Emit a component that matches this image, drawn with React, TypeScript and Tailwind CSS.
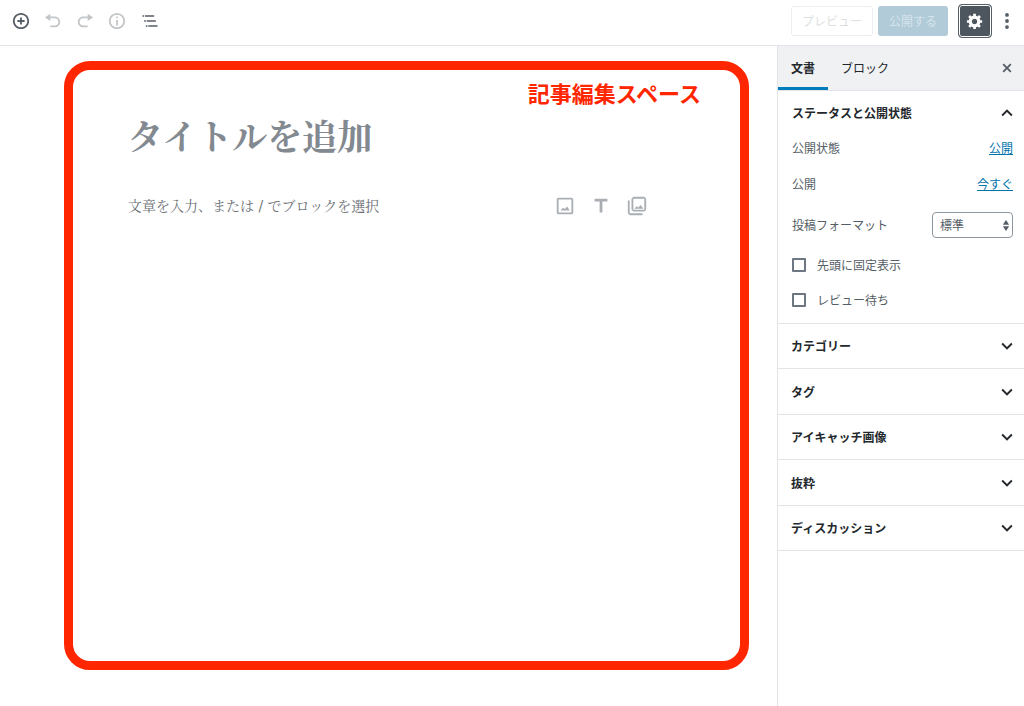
import React, { useState } from 'react';

const PANELS = ['カテゴリー', 'タグ', 'アイキャッチ画像', '抜粋', 'ディスカッション'];

type IconProps = { d: string; box?: number; className?: string };

function Icon({ d, box = 20, className = 'size-[18px]' }: IconProps) {
  return (
    <svg viewBox={`0 0 ${box} ${box}`} className={`shrink-0 fill-current ${className}`} aria-hidden="true">
      <path d={d} />
    </svg>
  );
}

const ICONS = {
  insert: 'M10 1c-5 0-9 4-9 9s4 9 9 9 9-4 9-9-4-9-9-9zm0 16c-3.9 0-7-3.1-7-7s3.1-7 7-7 7 3.1 7 7-3.1 7-7 7zm1-11H9v3H6v2h3v3h2v-3h3V9h-3V6z',
  undo: 'M12 5H7V2L1 6l6 4V7h5c2.2 0 4 1.8 4 4s-1.8 4-4 4H7v2h5c3.3 0 6-2.7 6-6s-2.7-6-6-6z',
  redo: 'M8 5h5V2l6 4-6 4V7H8c-2.2 0-4 1.8-4 4s1.8 4 4 4h5v2H8c-3.3 0-6-2.7-6-6s2.7-6 6-6z',
  info: 'M9 15h2V9H9v6zm1-10c-.5 0-1 .5-1 1s.5 1 1 1 1-.5 1-1-.5-1-1-1zm0-4c-5 0-9 4-9 9s4 9 9 9 9-4 9-9-4-9-9-9zm0 16c-3.9 0-7-3.1-7-7s3.1-7 7-7 7 3.1 7 7-3.1 7-7 7z',
  outline: 'M5 5H3v2h2V5zm3 8h11v-2H8v2zm9-8H6v2h11V5zM7 11H5v2h2v-2zm0 8h2v-2H7v2zm3-2v2h11v-2H10z',
  gear: 'M18 12h-2.18c-.17.7-.44 1.35-.81 1.93l1.54 1.54-2.1 2.1-1.54-1.54c-.58.36-1.23.63-1.91.79V19H8v-2.18c-.68-.16-1.33-.43-1.91-.79l-1.54 1.54-2.12-2.12 1.54-1.54c-.36-.58-.63-1.23-.79-1.91H1V9.03h2.17c.16-.7.44-1.35.8-1.94L2.43 5.55l2.1-2.1 1.54 1.54c.58-.37 1.24-.64 1.93-.81V2h3v2.18c.68.16 1.33.43 1.91.79l1.54-1.54 2.12 2.12-1.54 1.54c.36.59.64 1.24.8 1.94H18V12zm-8.5 1.5c1.66 0 3-1.34 3-3s-1.34-3-3-3-3 1.34-3 3 1.34 3 3 3z',
  more: 'M10 1.2a2.1 2.1 0 1 0 0 4.2 2.1 2.1 0 0 0 0-4.2zm0 6.7a2.1 2.1 0 1 0 0 4.2 2.1 2.1 0 0 0 0-4.2zm0 6.7a2.1 2.1 0 1 0 0 4.2 2.1 2.1 0 0 0 0-4.2z',
  close: 'M14.95 6.46L11.41 10l3.54 3.54-1.41 1.41L10 11.42l-3.53 3.53-1.42-1.42L8.58 10 5.05 6.47l1.42-1.42L10 8.58l3.54-3.53z',
  down: 'M7.41 8.59L12 13.17l4.59-4.58L18 10l-6 6-6-6z',
  up: 'M12 8l-6 6 1.41 1.41L12 10.83l4.59 4.58L18 14z',
  image: 'M19 5v14H5V5h14m0-2H5c-1.1 0-2 .9-2 2v14c0 1.1.9 2 2 2h14c1.1 0 2-.9 2-2V5c0-1.1-.9-2-2-2zM14.2 12.6l-2.4 2.8-2-1.6L7 17h10.2z',
  heading: 'M5 4v3h5.5v12h3V7H19V4z',
  gallery: 'M20 4v12H8V4h12m0-2H8L6 4v12l2 2h12l2-2V4l-2-2zM12 12l1 2 3-3 3 4H9zM2 6v14l2 2h14v-2H4V6H2z',
  updown: 'M5 0l4 6H1zM5 14L1 8h8z',
};

function CheckRow({ label }: { label: string }) {
  const [checked, setChecked] = useState(false);
  return (
    <label className="flex items-center gap-[11px] h-[35px]">
      <input
        type="checkbox"
        checked={checked}
        onChange={(e) => setChecked(e.target.checked)}
        className="appearance-none size-[14px] border-2 border-[#6c7781] rounded-[1px] bg-white checked:bg-[#11a0d2]"
      />
      {label}
    </label>
  );
}

export default function App() {
  const [title, setTitle] = useState('');
  const [body, setBody] = useState('');
  const [format, setFormat] = useState('標準');

  return (
    <div className="min-h-screen flex flex-col bg-white text-xs text-[#555d66] font-['Noto_Sans_CJK_JP',sans-serif]">
      {/* ツールバー */}
      <header className="h-[46px] shrink-0 flex items-center justify-between border-b border-[#e2e4e7] pl-3 pr-2 pb-[3px]">
        <div className="flex items-center gap-[14px] text-[#c3c6c9]">
          <button type="button" aria-label="ブロックの追加" className="text-[#555d66]"><Icon d={ICONS.insert} /></button>
          <button type="button" aria-label="元に戻す" disabled><Icon d={ICONS.undo} /></button>
          <button type="button" aria-label="やり直す" disabled><Icon d={ICONS.redo} /></button>
          <button type="button" aria-label="コンテンツ構造" disabled><Icon d={ICONS.info} /></button>
          <button type="button" aria-label="ブロックナビゲーション" className="text-[#555d66]">
            <Icon d={ICONS.outline} box={24} className="size-5" />
          </button>
        </div>
        <div className="flex items-center">
          <button type="button" disabled className="h-[30px] w-[82px] border border-[#eceeef] rounded-[3px] text-[#dcdfe2]">
            プレビュー
          </button>
          <button type="button" disabled className="h-[30px] w-[70px] ml-[5px] rounded-[3px] bg-[#b1cbd8] text-[#d5e4ec]">
            公開する
          </button>
          <button
            type="button"
            aria-label="設定"
            className="size-[34px] ml-[10px] flex items-center justify-center rounded-[4px] border border-[#555d66] bg-[#4d555f] text-white ring-1 ring-inset ring-white"
          >
            <Icon d={ICONS.gear} />
          </button>
          <button type="button" aria-label="ツールと設定をさらに表示" className="ml-[6px]"><Icon d={ICONS.more} /></button>
        </div>
      </header>

      <div className="flex-1 flex">
        {/* エディター */}
        <main className="flex-1 min-w-0 flex pt-[15px] pb-9 pl-16 pr-7">
          <section className="flex-1 min-w-0 border-[9px] border-[#ff2600] rounded-[26px]">
            <p className="pt-[6px] pr-[39px] text-right text-[22px] leading-8 font-bold text-[#ff2600]">記事編集スペース</p>
            <div className="pl-[55px] pr-[92px] font-['Noto_Serif_CJK_JP','Noto_Serif_JP','Noto_Sans_CJK_JP',serif]">
              <input
                type="text"
                aria-label="タイトルを追加"
                placeholder="タイトルを追加"
                value={title}
                onChange={(e) => setTitle(e.target.value)}
                className="block w-full h-[54px] text-[35px] font-bold outline-none placeholder:text-[#838990]"
              />
              <div className="flex items-center mt-[26px] h-9">
                <input
                  type="text"
                  aria-label="本文"
                  placeholder="文章を入力、または / でブロックを選択"
                  value={body}
                  onChange={(e) => setBody(e.target.value)}
                  className="flex-1 min-w-0 text-sm font-['DejaVu_Serif','Noto_Serif_CJK_JP','Noto_Sans_CJK_JP',serif] outline-none placeholder:text-[#6c7075]"
                />
                <div className="flex gap-[14px] text-[#a9aeb3]">
                  <button type="button" aria-label="画像を追加"><Icon d={ICONS.image} box={24} className="size-[22px]" /></button>
                  <button type="button" aria-label="見出しを追加"><Icon d={ICONS.heading} box={24} className="size-[22px]" /></button>
                  <button type="button" aria-label="ギャラリーを追加"><Icon d={ICONS.gallery} box={24} className="size-[22px]" /></button>
                </div>
              </div>
            </div>
          </section>
        </main>

        {/* 設定サイドバー */}
        <aside className="w-[247px] shrink-0 border-l border-[#e2e4e7]">
          <div className="h-[45px] flex bg-[#f0f1f3] border-b border-[#e2e4e7] text-[#23282d]">
            <button type="button" className="w-[50px] pt-[3px] border-b-[3px] border-[#007cba] font-bold">文書</button>
            <button type="button" className="px-[13px]">ブロック</button>
            <button type="button" aria-label="設定を閉じる" className="ml-auto mr-2 text-[#555d66]"><Icon d={ICONS.close} /></button>
          </div>

          <section className="border-b border-[#e2e4e7] pl-[14px] pr-[11px] pb-[6px]">
            <h2>
              <button type="button" className="w-full h-[39px] pt-1 flex items-center justify-between font-bold text-[#23282d]">
                ステータスと公開状態
                <Icon d={ICONS.up} box={24} className="size-[22px] -mr-[5px]" />
              </button>
            </h2>
            <div className="h-9 flex items-center justify-between">
              <span>公開状態</span>
              <button type="button" className="text-[#0073aa] underline">公開</button>
            </div>
            <div className="h-9 flex items-center justify-between">
              <span>公開</span>
              <button type="button" className="text-[#0073aa] underline">今すぐ</button>
            </div>
            <div className="h-[45px] flex items-center justify-between">
              <label htmlFor="post-format">投稿フォーマット</label>
              <div className="relative">
                <select
                  id="post-format"
                  value={format}
                  onChange={(e) => setFormat(e.target.value)}
                  className="appearance-none w-[81px] h-[26px] pl-[7px] pr-4 rounded-[4px] border border-[#8d96a0] bg-white"
                >
                  <option>標準</option>
                </select>
                <svg viewBox="0 0 10 14" className="absolute right-[3px] top-2 w-2 h-[11px] fill-current pointer-events-none" aria-hidden="true">
                  <path d={ICONS.updown} />
                </svg>
              </div>
            </div>
            <CheckRow label="先頭に固定表示" />
            <CheckRow label="レビュー待ち" />
          </section>

          {PANELS.map((name) => (
            <h2 key={name} className="h-[45px] even:h-[46px] border-b border-[#e2e4e7]">
              <button type="button" className="size-full pl-[13px] pr-[6px] flex items-center justify-between font-bold text-[#23282d]">
                {name}
                <Icon d={ICONS.down} box={24} className="size-[22px]" />
              </button>
            </h2>
          ))}
        </aside>
      </div>
    </div>
  );
}
